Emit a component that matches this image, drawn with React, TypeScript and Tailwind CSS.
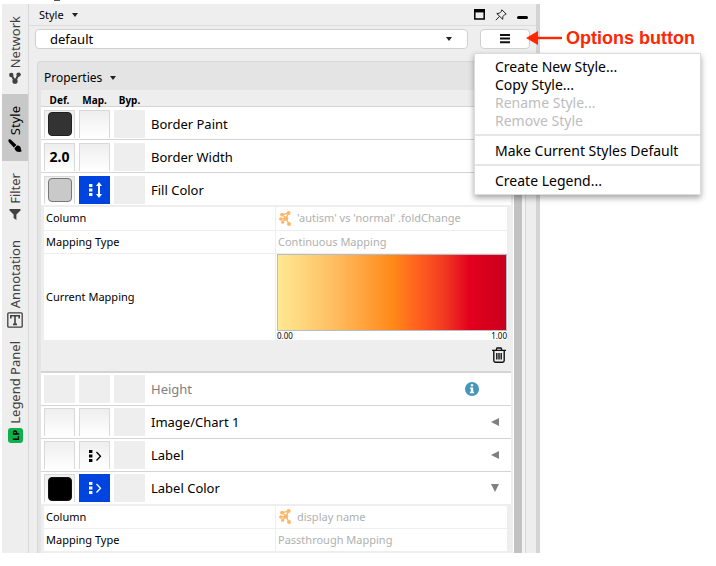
import type { ReactNode } from "react";

function ShareIcon() {
  return (
    <svg className="h-3 w-3" viewBox="0 0 12 12" aria-hidden="true">
      <path d="M2.5 3 6 9.5 9.5 2.5" stroke="currentColor" strokeWidth="2" fill="none" />
      <circle cx="2.3" cy="3" r="2.2" fill="currentColor" />
      <circle cx="9.6" cy="2.6" r="2.2" fill="currentColor" />
      <circle cx="6" cy="9.2" r="2.6" fill="currentColor" />
    </svg>
  );
}

function BrushIcon() {
  return (
    <svg className="h-3.5 w-3.5" viewBox="0 0 14 14" aria-hidden="true">
      <path d="M.4 1.8C.3.1 2.2 0 3.2 1l5.2 5-2.6 2.6L1.2 3.6Q.5 2.7.4 1.8Z" fill="currentColor" />
      <path d="M6.4 9.2 9 6.6q2-.3 3.2 1.2c1.2 1.6.2 3.4 1.8 4.2-2.6 2-6.3 1.2-7.6-2.8Z" fill="currentColor" />
    </svg>
  );
}

function FunnelIcon() {
  return (
    <svg className="h-3 w-3" viewBox="0 0 12 12" aria-hidden="true">
      <path d="M.5 1h11v1.4L7.4 6.4V12L4.6 10V6.4L.5 2.4Z" fill="currentColor" />
    </svg>
  );
}

function TextBoxIcon() {
  return (
    <svg className="h-4 w-4" viewBox="0 0 16 16" aria-hidden="true">
      <rect x=".8" y=".8" width="14.4" height="14.4" rx="1" fill="none" stroke="currentColor" strokeWidth="1.3" />
      <path d="M3.8 6.4V3.8h8.4v2.6M8 3.8v8.6M6 12.4h4" fill="none" stroke="currentColor" strokeWidth="1.6" />
    </svg>
  );
}

function NetworkGlyph() {
  return (
    <svg className="h-[15px] w-3 shrink-0 text-[#ffb766]" viewBox="0 0 12 15" fill="currentColor" aria-hidden="true">
      <path d="M7 7.5 9.6 2.2 3 3.6M9.6 2.2 7 7.5 10 13M7 7.5 2 8M7 7.5 3 11.5M3 3.6 7 7.5" stroke="currentColor" strokeWidth="1.4" fill="none" />
      <circle cx="9.6" cy="2" r="2" />
      <circle cx="3" cy="3.6" r="1.9" />
      <circle cx="7" cy="7.5" r="2.3" />
      <circle cx="1.8" cy="8" r="1.8" />
      <circle cx="3.6" cy="11.2" r="1.6" />
      <circle cx="10" cy="13" r="2" />
    </svg>
  );
}

function MappingIcon({ kind }: { kind: "continuous" | "passthrough" }) {
  return (
    <svg className="h-4 w-4" viewBox="0 0 16 16" aria-hidden="true">
      <path d="M2 2h3.4v3H2zM2 6.5h3.4v3H2zM2 11h3.4v3H2z" fill="currentColor" />
      {kind === "continuous" ? (
        <path d="M12 0 15 4h-2v8h2l-3 4-3-4h2V4H9Z" fill="currentColor" />
      ) : (
        <path d="m9.5 4 4 4.3-4 4.2" fill="none" stroke="currentColor" strokeWidth="1.3" />
      )}
    </svg>
  );
}

function Caret() {
  return (
    <svg className="h-1 w-[6px]" viewBox="0 0 6 4" aria-hidden="true">
      <path d="M0 0h6L3 4Z" fill="#222" />
    </svg>
  );
}

function SideTab({ label, icon, size, active = false }: { label: string; icon: ReactNode; size: string; active?: boolean }) {
  return (
    <button
      type="button"
      className={
        "flex w-full flex-col items-center justify-end gap-1 " +
        size +
        (active ? " bg-[#c8c8c8] text-black" : " text-[#404040]")
      }
    >
      <span className="rotate-180 text-[13px] leading-4 whitespace-nowrap [writing-mode:vertical-rl]">{label}</span>
      {icon}
    </button>
  );
}

type Row = {
  name: string;
  swatch?: string;
  value?: string;
  mapping?: "continuous" | "passthrough";
  selected?: boolean;
  disabled?: boolean;
  end?: "left" | "down" | "info";
};

const raised = "border border-b-0 border-[#d9d9d9] bg-linear-to-b from-[#eeeeee] to-white";

function PropertyRow({ row }: { row: Row }) {
  return (
    <div className="flex h-[33px] items-center gap-1 border-t border-[#d4d4d4] bg-white pt-px pr-2 pl-[3px]">
      <button
        type="button"
        aria-label={row.name + " default"}
        className={"flex h-7 w-[31px] items-center justify-center " + (row.disabled ? "bg-[#eeeeee]" : raised)}
      >
        {row.swatch && <span className={"h-6 w-6 rounded-[4px] border " + row.swatch} />}
        {row.value && <span className="text-[14px] leading-4 font-bold">{row.value}</span>}
      </button>
      <button
        type="button"
        aria-label={row.name + " mapping"}
        className={
          "flex h-7 w-[31px] items-center justify-center " +
          (row.disabled ? "bg-[#eeeeee]" : row.selected ? "bg-[#0044e0] text-white" : raised)
        }
      >
        {row.mapping && <MappingIcon kind={row.mapping} />}
      </button>
      <button type="button" aria-label={row.name + " bypass"} className="h-7 w-[31px] bg-[#eeeeee]" />
      <span className={"flex-1 pl-0.5 text-[13px] leading-4 " + (row.disabled ? "text-[#808080]" : "text-black")}>
        {row.name}
      </span>
      {row.end === "info" && (
        <svg className="mr-6 h-3.5 w-3.5" viewBox="0 0 14 14" role="img" aria-label="Information">
          <circle cx="7" cy="7" r="7" fill="#4596ba" />
          <path d="M5.8 2.2h2.4v2H5.8zM5 5.4h3.2v4.4H9v1.4H5V9.8h.8V6.8H5Z" fill="#fff" />
        </svg>
      )}
      {row.end === "left" && (
        <button type="button" aria-label={"Expand " + row.name} className="mr-1">
          <svg className="h-2 w-2" viewBox="0 0 8 8">
            <path d="M8 0v8L0 4Z" fill="#808080" />
          </svg>
        </button>
      )}
      {row.end === "down" && (
        <button type="button" aria-label={"Collapse " + row.name} className="mr-1">
          <svg className="h-2 w-2" viewBox="0 0 8 8">
            <path d="M0 0h8L4 8Z" fill="#808080" />
          </svg>
        </button>
      )}
    </div>
  );
}

function MappingTable({ column, type, children }: { column: string; type: string; children?: ReactNode }) {
  return (
    <table className="w-full table-fixed border-collapse bg-white text-left text-[11px] leading-4">
      <tbody>
        <tr className="h-[23px] border-b border-[#eeeeee]">
          <th scope="row" className="w-1/2 border-r border-[#eeeeee] pl-0.5 font-normal">Column</th>
          <td className="pl-[3px] text-[#b0b0b0]">
            <span className="flex items-center gap-1.5">
              <NetworkGlyph />
              {column}
            </span>
          </td>
        </tr>
        <tr className="h-[23px] border-b border-[#eeeeee]">
          <th scope="row" className="border-r border-[#eeeeee] pl-0.5 font-normal">Mapping Type</th>
          <td className="pl-0.5 text-[#b0b0b0]">{type}</td>
        </tr>
        {children}
      </tbody>
    </table>
  );
}

function OptionsMenu() {
  const item = "block w-full px-5 text-left text-[14px] leading-[18px] whitespace-nowrap";
  return (
    <div
      role="menu"
      className="absolute top-6 -left-1.5 z-10 w-[227px] border border-[#dcdcdc] bg-white py-1 shadow-[0_3px_6px_rgba(0,0,0,0.35)]"
    >
      <button role="menuitem" type="button" className={item}>Create New Style...</button>
      <button role="menuitem" type="button" className={item}>Copy Style...</button>
      <button role="menuitem" type="button" disabled className={item + " text-[#bdbdbd]"}>Rename Style...</button>
      <button role="menuitem" type="button" disabled className={item + " text-[#bdbdbd]"}>Remove Style</button>
      <hr className="mt-1 mb-1.5 border-t-2 border-[#e6e6e6]" />
      <button role="menuitem" type="button" className={item}>Make Current Styles Default</button>
      <hr className="mt-1 mb-1.5 border-t-2 border-[#e6e6e6]" />
      <button role="menuitem" type="button" className={item}>Create Legend...</button>
    </div>
  );
}

const upperRows: Row[] = [
  { name: "Border Paint", swatch: "border-[#202020] bg-[#333333]" },
  { name: "Border Width", value: "2.0" },
  { name: "Fill Color", swatch: "border-[#777777] bg-[#c9c9c9]", mapping: "continuous", selected: true },
];

const lowerRows: Row[] = [
  { name: "Height", disabled: true, end: "info" },
  { name: "Image/Chart 1", end: "left" },
  { name: "Label", mapping: "passthrough", end: "left" },
  { name: "Label Color", swatch: "border-[#111111] bg-black", mapping: "passthrough", selected: true, end: "down" },
];

export default function App() {
  return (
    <div className="min-h-screen bg-white pb-3 pl-0.5 font-['Noto_Sans','Open_Sans',sans-serif] text-black">
      <div className="flex h-1 pl-[52px]">
        <div className="h-px w-1.5 bg-[#555555]" />
      </div>
      <div className="flex">
        <main className="flex min-w-0 flex-1 bg-[#eeeeee]">
          <nav aria-label="Panels" className="flex w-[27px] shrink-0 flex-col border-r border-[#d8d8d8]">
            <SideTab label="Network" icon={<ShareIcon />} size="h-[90px] pb-2.5" />
            <SideTab label="Style" icon={<BrushIcon />} size="h-[67px] pb-2" active />
            <SideTab label="Filter" icon={<FunnelIcon />} size="h-[67px] pb-2" />
            <SideTab label="Annotation" icon={<TextBoxIcon />} size="h-[108px] pb-2" />
            <SideTab
              label="Legend Panel"
              size="h-[115px] pb-2"
              icon={
                <span className="flex h-[15px] w-[15px] items-center justify-center rounded-[3px] bg-[#0db14b]">
                  <span className="rotate-180 text-[9px] leading-none font-bold text-black [writing-mode:vertical-rl]">LP</span>
                </span>
              }
            />
          </nav>

          <div className="flex min-w-0 flex-1 flex-col border-r-4 border-[#d4d4d4]">
            <header className="flex h-[22px] items-center justify-between border-b border-[#dcdcdc] pr-2 pl-2.5">
              <button type="button" className="flex items-center gap-2 text-[11px] leading-4">
                Style <Caret />
              </button>
              <div className="flex items-center gap-2.5">
                <button type="button" aria-label="Float panel">
                  <svg className="h-[11px] w-[11px]" viewBox="0 0 11 11">
                    <path d="M.8 1h9.4v9H.8Z" fill="none" stroke="#000" strokeWidth="1.5" />
                    <path d="M0 0h11v3.4H0Z" fill="#000" />
                  </svg>
                </button>
                <button type="button" aria-label="Pin panel">
                  <svg className="h-3 w-3" viewBox="0 0 12 12">
                    <path d="M6.8.8 11.2 5l-1.3.4-2 2.2-.2 2.7L1.8 4.6l2.7-.4 2-2ZM4.5 7.4.8 11.2" fill="none" stroke="#222" strokeWidth="1" strokeLinejoin="round" />
                  </svg>
                </button>
                <button type="button" aria-label="Minimize panel" className="pt-1.5">
                  <span className="block h-[3px] w-[11px] rounded-sm bg-black" />
                </button>
              </div>
            </header>

            <div className="flex items-center gap-3 py-[3px] pr-1.5 pl-1.5">
              <div className="relative flex-1">
                <select
                  aria-label="Current style"
                  className="block h-5 w-full appearance-none rounded-[4px] border border-[#d0d0d0] bg-white pl-3.5 text-[13px] leading-4"
                >
                  <option>default</option>
                </select>
                <span className="pointer-events-none absolute inset-y-0 right-4 flex items-center">
                  <Caret />
                </span>
              </div>
              <div className="relative">
                <button
                  type="button"
                  aria-label="Options"
                  className="flex h-5 w-[50px] items-center justify-center rounded-[4px] border border-[#d0d0d0] bg-white"
                >
                  <svg className="h-2.5 w-2.5" viewBox="0 0 10 10">
                    <path d="M0 0h10v2H0zM0 3.6h10v2H0zM0 7.2h10v2H0z" fill="#111" />
                  </svg>
                </button>
                <OptionsMenu />
              </div>
            </div>

            <section className="mt-[9px] mr-2.5 ml-2 rounded-t-[4px] border border-b-0 border-[#d8d8d8] bg-[#e4e4e4]">
              <h2 className="flex h-7 items-center pt-1 pl-1.5">
                <button type="button" className="flex items-center gap-2 text-[12px] leading-4">
                  Properties <Caret />
                </button>
              </h2>
              <div className="flex pl-[3px]">
                <div className="min-w-0 flex-1 bg-[#eeeeee] pr-0.5">
                  <div className="flex h-4 items-center gap-1 pt-1 pl-[3px] text-[10px] leading-3 font-bold">
                    <span className="w-[31px] text-center">Def.</span>
                    <span className="w-[31px] text-center">Map.</span>
                    <span className="w-[31px] text-center">Byp.</span>
                  </div>
                  {upperRows.map((row) => (
                    <PropertyRow key={row.name} row={row} />
                  ))}
                  <div className="pt-0.5 pr-1 pl-[3px]">
                    <MappingTable column="'autism' vs 'normal' .foldChange" type="Continuous Mapping">
                      <tr className="h-[86px]">
                        <th scope="row" className="border-r border-[#eeeeee] pl-0.5 font-normal">Current Mapping</th>
                        <td className="pl-px align-top">
                          <div
                            role="img"
                            aria-label="Color gradient from 0.00 to 1.00"
                            className="h-[77px] border border-[#b8bcc4] bg-[linear-gradient(to_right,#ffe993_0%,#ffb95b_27%,#ff8718_51%,#ff5a20_63%,#f03a20_73%,#e4001e_84%,#c9001c_100%)]"
                          />
                          <div className="flex h-[9px] justify-between text-[8px] leading-[10px]">
                            <span>0.00</span>
                            <span>1.00</span>
                          </div>
                        </td>
                      </tr>
                    </MappingTable>
                    <div className="flex h-[31px] items-center justify-end pr-px">
                      <button type="button" aria-label="Remove mapping">
                        <svg className="h-4 w-3.5" viewBox="0 0 14 16" fill="none" stroke="#111" strokeWidth="1.4">
                          <path d="M0 3.4h14M4 3.4 5 1h4l1 2.4M1.8 3.6v10q0 1.6 1.6 1.6h7.2q1.6 0 1.6-1.6v-10M4.8 6v6.6M7 6v6.6M9.2 6v6.6" />
                        </svg>
                      </button>
                    </div>
                  </div>
                  <div className="border-t border-[#d4d4d4]">
                    {lowerRows.map((row) => (
                      <PropertyRow key={row.name} row={row} />
                    ))}
                  </div>
                  <div className="pt-0.5 pr-1 pb-px pl-[3px]">
                    <MappingTable column="display name" type="Passthrough Mapping" />
                  </div>
                </div>
                <div className="w-3 border-l border-white bg-[#f4f4f4] pr-[3px]">
                  <div className="h-full bg-[#c2c2c2]" />
                </div>
              </div>
            </section>
          </div>
        </main>

        <aside className="w-44 shrink-0 pt-[22px]">
          <p className="-ml-3.5 flex items-center gap-1 text-[18px] leading-6 font-bold whitespace-nowrap text-[#ff2600] [font-family:'Liberation_Sans',Arial,sans-serif]">
            <svg className="relative h-3.5 w-9 shrink-0" viewBox="0 0 36 14" aria-hidden="true">
              <path d="M0 7 12 0v14Z" fill="#ff2600" />
              <path d="M10 7h26" stroke="#ff2600" strokeWidth="2.4" />
            </svg>
            Options button
          </p>
        </aside>
      </div>
    </div>
  );
}
